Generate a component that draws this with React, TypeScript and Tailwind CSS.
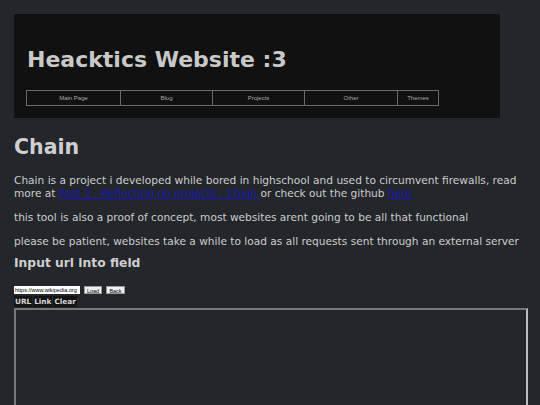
import React from "react";

export default function App() {
  const nav = [
    { t: "Main Page", w: "w-[93px]" },
    { t: "Blog", w: "w-[92px]" },
    { t: "Projects", w: "w-[92px]" },
    { t: "Other", w: "w-[93px]" },
    { t: "Themes", w: "w-[41px]" },
  ];
  return (
    <div className="w-[540px] h-[405px] overflow-hidden bg-[#23262b] text-[#cdcdcd] px-[14px] pt-[14px]" style={{ fontFamily: '"DejaVu Sans", sans-serif' }}>
      <div className="w-[486px] h-[104px] bg-[#111111] pl-[12px] pt-[32px] flex flex-col">
        <div className="pl-[1px] text-[22px] leading-[28px] font-bold text-[#c9c9c9]">Heacktics Website :3</div>
        <div className="mt-[16px] flex h-[16px] border border-[#6a6a6a] w-fit" style={{ fontFamily: '"Liberation Sans", Arial, sans-serif' }}>
          {nav.map((n, i) => (
            <div key={n.t} className={`${n.w} h-full flex items-center justify-center text-[6px] text-[#a8a8a8] ${i > 0 ? "border-l border-[#6a6a6a]" : ""}`}>
              {n.t}
            </div>
          ))}
        </div>
      </div>
      <div className="mt-[16px] text-[20.5px] leading-[26px] font-bold text-[#cfcfcf]">Chain</div>
      <p className="mt-[14px] text-[10.6px] leading-[13px]">
        Chain is a project i developed while bored in highschool and used to circumvent firewalls, read more at{" "}
        <a className="text-[#1818c0] underline">Post 2 : Reflecting on projects : Chain </a>or check out the github{" "}
        <a className="text-[#1818c0] underline">here</a>
      </p>
      <p className="mt-[11px] text-[10.6px] leading-[13px]">this tool is also a proof of concept, most websites arent going to be all that functional</p>
      <p className="mt-[10.5px] text-[10.6px] leading-[13px] whitespace-nowrap">please be patient, websites take a while to load as all requests sent through an external server</p>
      <div className="mt-[7px] text-[12.3px] leading-[16px] font-bold text-[#cfcfcf]">Input url into field</div>
      <div className="mt-[15px] flex items-center gap-[4px] h-[9px]" style={{ fontFamily: '"Liberation Sans", Arial, sans-serif' }}>
        <div className="w-[66px] h-[8px] bg-white text-black text-[5.5px] leading-[8px] px-[1px] overflow-hidden whitespace-nowrap">https://www.wikipedia.org</div>
        <div className="w-[18px] h-[8px] bg-[#efefef] text-black text-[5.5px] leading-[8px] text-center border border-[#999]">Load</div>
        <div className="w-[19px] h-[8px] bg-[#efefef] text-black text-[5.5px] leading-[8px] text-center border border-[#999]">Back</div>
      </div>
      <div className="mt-[1px] flex gap-[1px] h-[11px] text-[7.3px] leading-[11px] font-bold text-[#d8d8d8]">
        <div className="bg-[#141414] px-[1px]">URL</div>
        <div className="bg-[#141414] px-[1px]">Link</div>
        <div className="bg-[#141414] px-[1px]">Clear</div>
      </div>
      <div className="mt-[1px] w-[514px] h-[120px] border-2 border-t-[#777] border-l-[#777] border-r-[#bdbdbd] border-b-[#bdbdbd]"></div>
    </div>
  );
}
